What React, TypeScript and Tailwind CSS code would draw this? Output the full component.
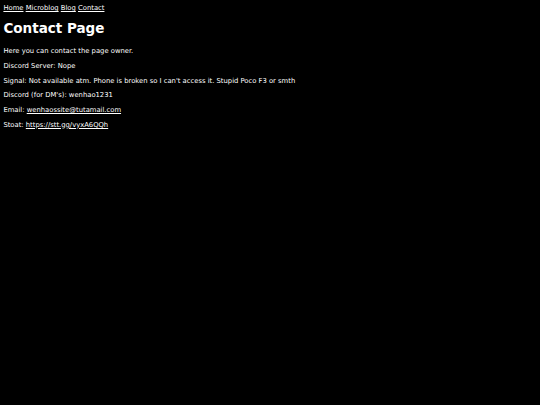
export default function App() {
  return (
    <div className="min-h-[405px] bg-black px-[3.4px] pt-[5px] text-white text-[6.8px] leading-[1.164] font-['DejaVu_Sans',Verdana,sans-serif]">
      <nav>
        <a href="#" className="underline">Home</a>{' '}
        <a href="#" className="underline">Microblog</a>{' '}
        <a href="#" className="underline">Blog</a>{' '}
        <a href="#" className="underline">Contact</a>
      </nav>
      <h1 className="mt-[8.2px] mb-[11.4px] text-[13.5px] font-bold leading-[1.164]">Contact Page</h1>
      <p className="my-[6.8px]">Here you can contact the page owner.</p>
      <p className="my-[6.8px]">Discord Server: Nope</p>
      <p className="my-[6.8px]">
        Signal: Not available atm. Phone is broken so I can't access it. Stupid Poco F3 or smth
      </p>
      <p className="my-[6.8px]">Discord (for DM's): wenhao1231</p>
      <p className="my-[6.8px]">
        Email: <a href="#" className="underline">wenhaossite@tutamail.com</a>
      </p>
      <p className="my-[6.8px]">
        Stoat: <a href="#" className="underline">https://stt.gg/vyxA6QQh</a>
      </p>
    </div>
  );
}
